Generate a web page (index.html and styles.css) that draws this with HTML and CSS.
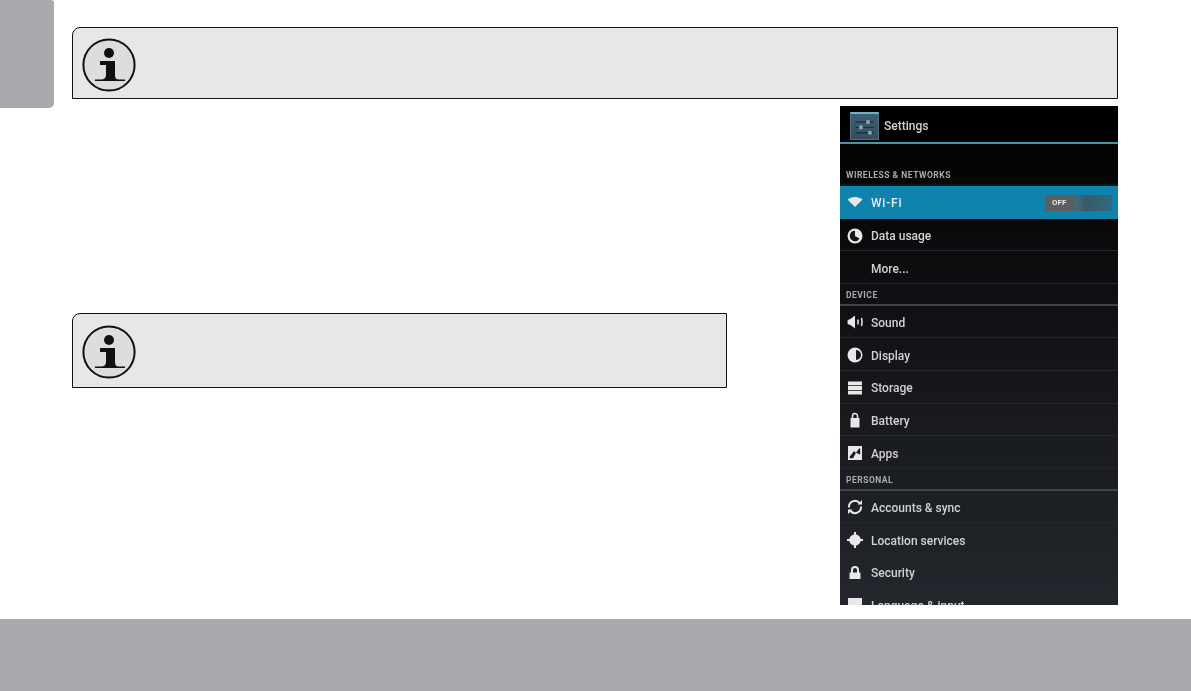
FILE: index.html
```html
<!DOCTYPE html>
<html lang="en">
<head>
<meta charset="utf-8">
<title>Settings</title>
<link rel="stylesheet" href="styles.css">
</head>
<body>
<svg class="defs" width="0" height="0" aria-hidden="true">
  <symbol id="info" viewBox="0 0 56 56">
    <circle class="info-ring" cx="28" cy="27" r="25.6"/>
    <circle class="info-ink" cx="28" cy="15" r="5"/>
    <path class="info-ink" d="M19 23H34V37C34 40 35 41.500 38 41.500H44V43H14V41.500H20C23 41.500 25 40 25 37V27H19Z"/>
  </symbol>
</svg>
<div class="page">
  <main class="main">
    <div class="tab"></div>
    <div class="content">
      <div class="note note-top">
        <svg class="info-icon"><use href="#info"/></svg>
      </div>
      <div class="lower">
        <div class="note note-inner">
          <svg class="info-icon"><use href="#info"/></svg>
        </div>
        <section class="phone">
          <header class="bar">
            <span class="app-icon">
              <svg viewBox="0 0 28 28"><path class="sliders" d="M4 9h20M4 15h20M4 21h20"/><path class="knobs" d="M16 7h4v4h-4zM8 13h4v4H8zM18 19h4v4h-4z"/></svg>
            </span>
            <span class="bar-title">Settings</span>
          </header>
          <div class="label label-first">WIRELESS &amp; NETWORKS</div>
          <div class="row row-active">
            <svg class="ico" viewBox="0 0 16 16"><path class="solid" d="M0.500 5.500C4.500 2 11.500 2 15.500 5.500L8 13z"/></svg>
            <span class="wifi">Wi-Fi</span>
            <span class="toggle"><span class="toggle-off">OFF</span></span>
          </div>
          <div class="row">
            <svg class="ico" viewBox="0 0 16 16"><circle class="solid" cx="8" cy="8" r="7.500"/><path class="cut" d="M8 2.800a5.200 5.200 0 1 0 4.500 7.800L8 8z"/></svg>
            <span>Data usage</span>
          </div>
          <div class="row"><span class="ico"></span><span>More...</span></div>
          <div class="label">DEVICE</div>
          <div class="row">
            <svg class="ico" viewBox="0 0 16 16"><path class="solid" d="M0.500 6.500Q2 5 3.500 5L8 1.500v13L3.500 11Q2 11 0.500 9.500z"/><path class="line-thin" d="M11 5.500v5M14.500 4q1 4 0 8"/></svg>
            <span>Sound</span>
          </div>
          <div class="row">
            <svg class="ico" viewBox="0 0 16 16"><circle class="solid" cx="8" cy="8" r="7.500"/><path class="cut" d="M9 3a5 5 0 0 1 0 10z"/></svg>
            <span>Display</span>
          </div>
          <div class="row">
            <svg class="ico" viewBox="0 0 16 16"><path class="solid" d="M1 1.500h14v3.800H1zM1 6.100h14v3.800H1zM1 10.700h14v3.800H1z"/></svg>
            <span>Storage</span>
          </div>
          <div class="row">
            <svg class="ico" viewBox="0 0 16 16"><path class="line-thin" d="M5.500 6V4a2.500 2.500 0 0 1 5 0v2"/><path class="solid" d="M3.500 6h9v9.500h-9z"/></svg>
            <span>Battery</span>
          </div>
          <div class="row">
            <svg class="ico" viewBox="0 0 16 16"><path class="solid" d="M1 1h14v14H1z"/><path class="cut" d="M2.800 11.500L7 6l2 2 3-4.500h1.200v6L9 7.800 6 13.200H2.800z"/></svg>
            <span>Apps</span>
          </div>
          <div class="label">PERSONAL</div>
          <div class="row">
            <svg class="ico" viewBox="0 0 16 16"><path class="line" d="M2 8.500A6 6 0 0 1 12.500 4M14 7.500A6 6 0 0 1 3.500 12"/><path class="solid" d="M10.500 5.500H15V1zM5.500 10.500H1V15z"/></svg>
            <span>Accounts &amp; sync</span>
          </div>
          <div class="row">
            <svg class="ico" viewBox="0 0 16 16"><path class="line" d="M8 0v16M0 8h16"/><circle class="solid" cx="8" cy="8" r="5.800"/></svg>
            <span>Location services</span>
          </div>
          <div class="row">
            <svg class="ico" viewBox="0 0 16 16"><path class="line" d="M5 8V5a3 3 0 0 1 6 0v3"/><path class="solid" d="M2.500 7.500h11V14h-11z"/></svg>
            <span>Security</span>
          </div>
          <div class="row">
            <svg class="ico" viewBox="0 0 16 16"><path class="solid" d="M1 1h14v14H1z"/></svg>
            <span>Language &amp; input</span>
          </div>
        </section>
      </div>
    </div>
  </main>
  <footer class="footer"></footer>
</div>
</body>
</html>
```

FILE: styles.css
```css
* { box-sizing: border-box; }

html, body {
  margin: 0;
  padding: 0;
  background: #fff;
}

.defs { position: absolute; }

.page {
  width: 1191px;
  height: 691px;
  display: flex;
  flex-direction: column;
  overflow: hidden;
}

.main {
  height: 619px;
  display: flex;
  align-items: flex-start;
}

.tab {
  width: 54px;
  height: 108px;
  flex: none;
  background: #a7a9ac;
  border-bottom-right-radius: 5px;
  border-top-right-radius: 3px;
}

.content {
  width: 1046px;
  margin-left: 18px;
  padding-top: 27px;
}

.note {
  background: #e6e7e8;
  border: 1px solid #111;
  border-top-left-radius: 8px;
  padding: 10px 0 0 8px;
}

.note-top { height: 72px; }

.note-inner {
  width: 655px;
  height: 75px;
  margin-top: 214px;
  padding-top: 11px;
  flex: none;
}

.info-icon {
  display: block;
  width: 56px;
  height: 56px;
}

.info-ring {
  fill: #dcddde;
  stroke: #111;
  stroke-width: 2;
}

.info-ink { fill: #111; }

.lower {
  display: flex;
  align-items: flex-start;
  justify-content: space-between;
}

.phone {
  width: 278px;
  height: 499px;
  margin-top: 7px;
  overflow: hidden;
  background: linear-gradient(#000 0, #0b0c0e 150px, #17191d 300px, #23262c 499px);
  font-family: Roboto, "Liberation Sans", sans-serif;
  color: #d2d2d2;
  font-size: 12px;
  font-weight: 500;
}

.phone > * { filter: blur(0.7px); }

.bar {
  height: 38px;
  background: #000;
  border-bottom: 2px solid #4d93a8;
  display: flex;
  align-items: center;
  gap: 5px;
  padding: 3px 0 0 10px;
}

.app-icon {
  width: 29px;
  height: 28px;
  display: block;
  background: linear-gradient(#3d5f73, #34505f);
  border: 1px solid #50707f;
  border-top: 2px solid #6fb2cc;
}

.app-icon svg {
  display: block;
  width: 100%;
  height: 100%;
}

.sliders {
  fill: none;
  stroke: #1d303b;
  stroke-width: 1.5;
}

.knobs { fill: #86a8b8; }

.bar-title { color: #d2d2d2; }

.label {
  height: 21.5px;
  padding: 6px 0 0 6px;
  border-bottom: 2px solid #3f4246;
  font-size: 8.5px;
  line-height: 11px;
  font-weight: 700;
  letter-spacing: 0.5px;
  color: #a9abad;
}

.label-first {
  height: 42px;
  padding-top: 26px;
  border-bottom-color: #101214;
}

.row {
  height: 32.7px;
  display: flex;
  align-items: center;
  padding: 3px 6px 0 7px;
  border-bottom: 1px solid #24272b;
}

.row-active {
  padding-top: 1px;
  background: #0f83ab;
  border-bottom: 0;
  color: #e4eef2;
}

.wifi { letter-spacing: 0.8px; }

.ico {
  width: 16px;
  height: 16px;
  flex: none;
  margin: -1px 8px 0 0;
  display: block;
}

.solid { fill: #e8e8e8; }

.cut { fill: #15171a; }

.line {
  fill: none;
  stroke: #e8e8e8;
  stroke-width: 2;
}

.line-thin {
  fill: none;
  stroke: #e8e8e8;
  stroke-width: 1.500;
}

.toggle {
  width: 67px;
  height: 16px;
  margin-left: auto;
  display: block;
  background: linear-gradient(90deg, #3e6f82 45%, #39596a 60%, #2f6a80);
}

.toggle-off {
  display: block;
  width: 31px;
  height: 16px;
  padding-left: 7px;
  background: #5a5f61;
  color: #e8e8e8;
  font-size: 8px;
  line-height: 16px;
  font-weight: 700;
}

.footer {
  height: 72px;
  background: #a7a9ac;
}
```
